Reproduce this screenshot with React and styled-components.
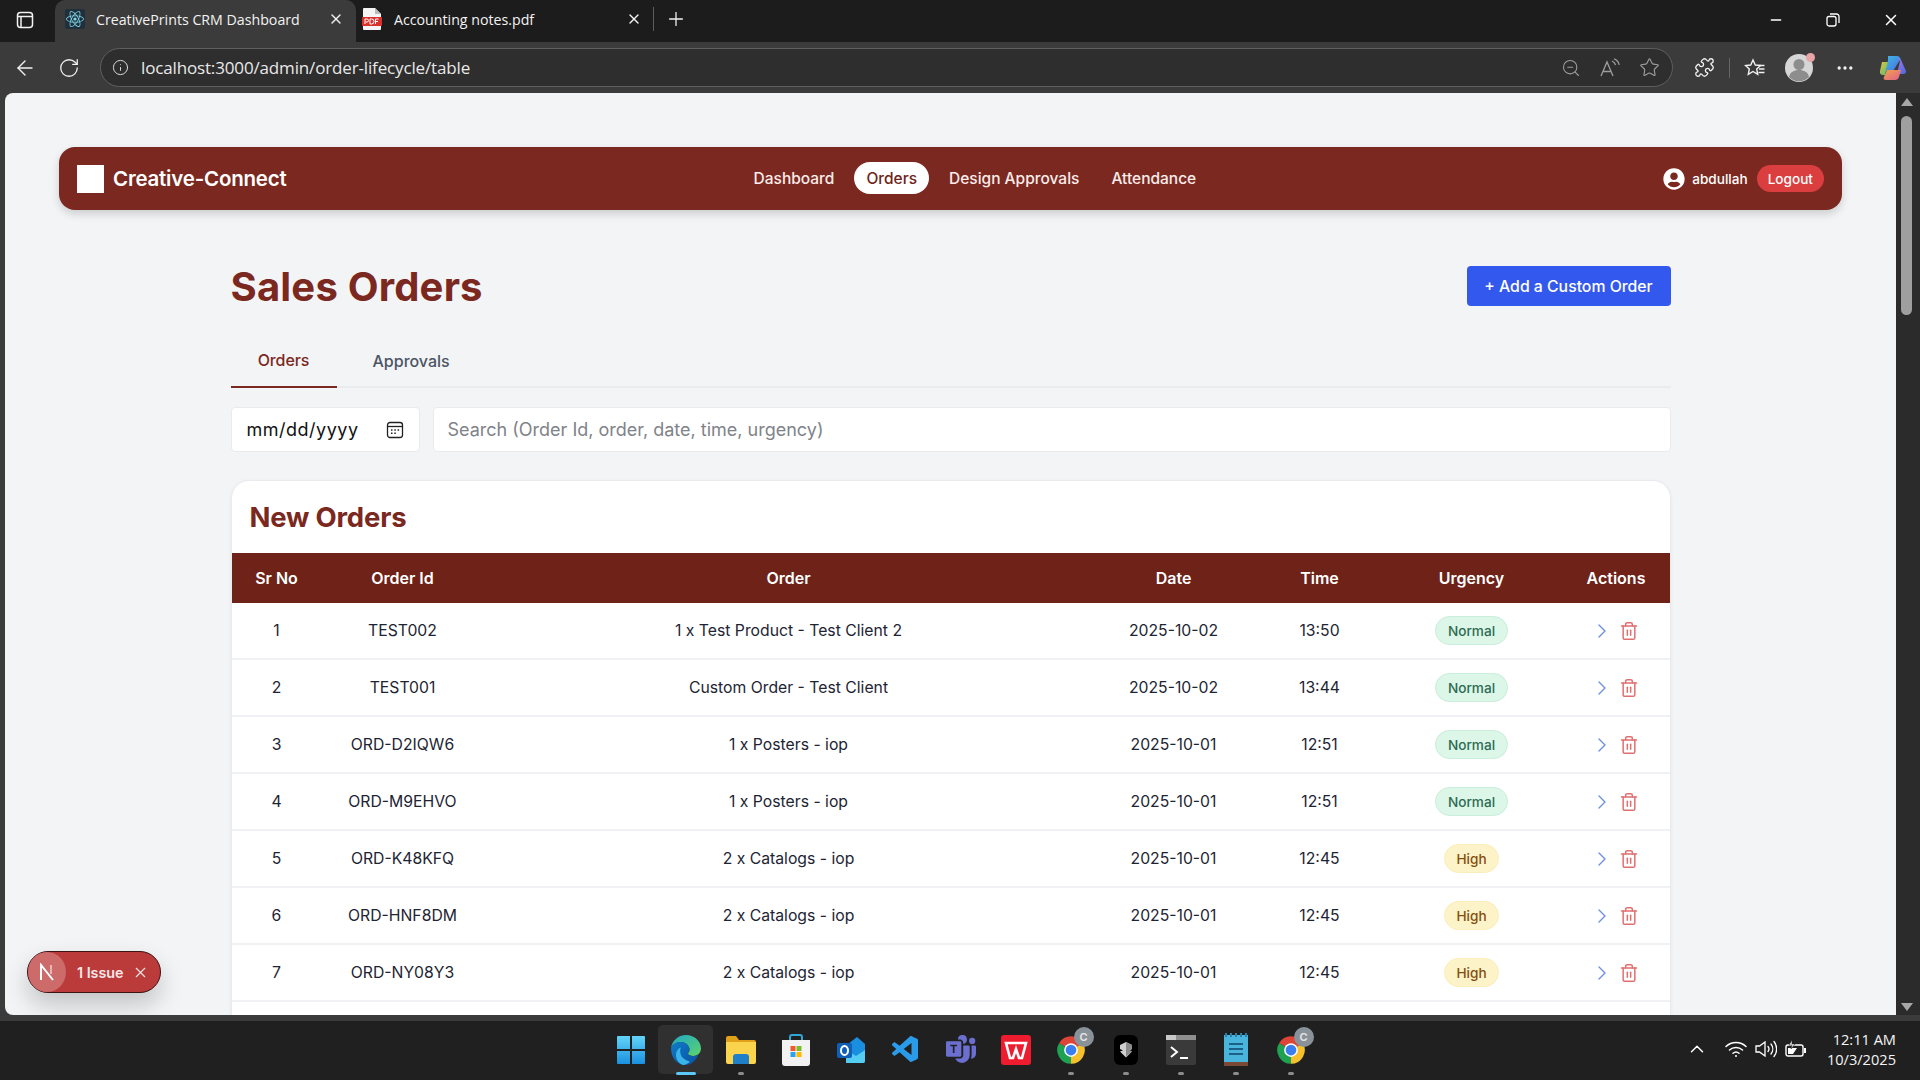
import React from 'react';
import styled, { createGlobalStyle } from 'styled-components';
import { ArrowLeft, RotateCw, Info, ZoomOut, Star, Puzzle, MoreHorizontal, Minus, X, Plus, ChevronRight, Trash2, ChevronUp } from 'lucide-react';
import { FaUserCircle, FaReact } from 'react-icons/fa';
import { VscVscode } from 'react-icons/vsc';
import { BsMicrosoftTeams } from 'react-icons/bs';

const GlobalStyle = createGlobalStyle`
  html, body { margin: 0; height: 100%; overflow: hidden; background: #202020; }
  * { box-sizing: border-box; }
  #root { height: 100%; }
`;

const Frame = styled.div`
  width: 1920px; height: 1080px; display: flex; flex-direction: column;
  background: #3b3b3b; font-family: Inter, "Liberation Sans", sans-serif; overflow: hidden;
`;
const TabStrip = styled.div`
  height: 42px; flex: none; background: #1c1c1c; display: flex; align-items: stretch; color: #f2f2f2;
  font-family: "Open Sans", "Liberation Sans", sans-serif; font-size: 14.2px;
`;
const StripIcon = styled.div`
  width: 55px; display: flex; align-items: center; justify-content: center; padding: 0 6px 3px 0;
`;
const PlusSlot = styled.div`
  display: flex; align-items: center; justify-content: center; padding-bottom: 4px;
`;
const Tab = styled.div`
  width: ${p => p.$w}px; display: flex; align-items: center; padding: 0 ${p => p.$pr}px 4px ${p => p.$pl}px; gap: ${p => p.$gap}px;
  background: ${p => p.$active ? '#3b3b3b' : 'transparent'};
  border-radius: ${p => p.$active ? '10px 10px 0 0' : '0'};
`;
const TabTitle = styled.span`
  flex: 1; white-space: nowrap; overflow: hidden;
`;
const TabDivider = styled.div`
  width: 1px; height: 24px; background: #5c5c5c; align-self: center; margin: 0 11px 4px 0;
`;
const StripFill = styled.div`flex: 1;`;
const WinControls = styled.div`
  display: flex; align-items: center; gap: 42px; padding: 0 20px 3px 0; color: #fff;
`;
const Toolbar = styled.div`
  height: 51px; flex: none; background: #3b3b3b; display: flex; align-items: center; color: #f2f2f2;
`;
const NavBtns = styled.div`
  width: 100px; display: flex; align-items: center; gap: 21px; padding-left: 13px; flex: none;
`;
const AddressBar = styled.div`
  width: 1573px; height: 39px; flex: none; border: 1.5px solid #5f5f5f; border-radius: 20px; background: #2e2e2e;
  display: flex; align-items: center; padding: 0 12px 0 11px; gap: 12px;
`;
const Url = styled.span`
  flex: 1; font-family: "Open Sans", "Liberation Sans", sans-serif; font-size: 17px; color: #e9e9e9; letter-spacing: -0.15px;
`;
const AddressIcons = styled.div`
  display: flex; align-items: center; gap: 18px; color: #9d9d9d;
`;
const ToolIcons = styled.div`
  flex: 1; display: flex; align-items: center; padding-left: 21px; color: #f2f2f2;
`;
const ToolSep = styled.div`
  width: 1px; height: 20px; background: #666; margin: 0 14px 0 14px;
`;
const ProfileWrap = styled.div`
  position: relative; width: 28px; height: 28px; margin: 0 22px 0 19px;
`;
const ProfileDot = styled.span`
  position: absolute; top: -1px; right: -2px; width: 9px; height: 9px; border-radius: 50%; background: #e9a6a6;
`;
const CopilotSlot = styled.span`
  display: block; margin-left: 24px; height: 28px;
`;
const Viewport = styled.div`
  height: 922px; flex: none; display: flex; background: #3b3b3b;
`;
const Page = styled.div`
  position: relative; flex: none; width: 1891px; margin-left: 5px; background: #f3f4f6; border-radius: 8px 0 0 8px; overflow: hidden;
  padding: 54px 54px 0;
`;
const ScrollTrack = styled.div`
  width: 24px; flex: none; background: #2b2b2b; display: flex; flex-direction: column; align-items: center; padding: 5px 3px 0 0;
`;
const ScrollArrow = styled.span`
  width: 0; height: 0; border-left: 6px solid transparent; border-right: 6px solid transparent;
  border-bottom: 8px solid #a8a8a8;
`;
const ScrollThumb = styled.div`
  width: 11px; height: 199px; margin-top: 10px; border-radius: 6px; background: #9f9f9f;
`;
const ScrollSpacer = styled.div`flex: 1;`;
const ScrollArrowDown = styled(ScrollArrow)`
  border-bottom: 0; border-top: 8px solid #a8a8a8; margin-bottom: 4px;
`;
const Nav = styled.nav`
  height: 63px; border-radius: 16px; background: #7b2820; box-shadow: 0 4px 8px rgba(0,0,0,.16);
  display: flex; align-items: center; justify-content: space-between; padding: 0 18px;
  color: #fff;
`;
const Brand = styled.div`
  display: flex; align-items: center; gap: 9px; font-size: 20.5px; font-weight: 600; letter-spacing: -0.2px;
`;
const BrandLogo = styled.span`
  width: 27px; height: 28px; background: #fff; display: block;
`;
const NavLinks = styled.div`
  display: flex; align-items: center; gap: 8px; margin-top: -1px;
`;
const NavLink = styled.a`
  height: 32px; padding: 0 12px; display: flex; align-items: center; border-radius: 16px; font-size: 15.5px; font-weight: 500;
  background: ${p => p.$active ? '#fff' : 'transparent'}; color: ${p => p.$active ? '#6f2318' : '#fbecea'};
`;
const UserBox = styled.div`
  display: flex; align-items: center; font-size: 13.6px; font-weight: 500;
`;
const UserName = styled.span`
  margin: 0 9px 0 7px;
`;
const LogoutBtn = styled.span`
  height: 27px; padding: 0 11px; border-radius: 14px; background: #db3e3e; display: flex; align-items: center; font-size: 13.6px; font-weight: 500;
`;
const Main = styled.main`
  width: 1440px; margin: 0 auto;
`;
const HeadRow = styled.div`
  height: 40px; margin-top: 56px; display: flex; align-items: center; justify-content: space-between;
`;
const Title = styled.h1`
  margin: 0; font-size: 40px; font-weight: 700; color: #7b2820; letter-spacing: 0.2px;
`;
const AddBtn = styled.button`
  width: 204px; height: 40px; border: 0; border-radius: 4px; background: #3358ee; color: #fff; font: 500 15.8px Inter, sans-serif;
`;
const Tabs = styled.div`
  display: flex; margin-top: 35px; height: 47px; border-bottom: 2px solid #e9ebee;
`;
const TabBtn = styled.div`
  height: 47px; display: flex; align-items: center; justify-content: center; font-size: 16px; font-weight: 500;
  color: ${p => p.$active ? '#7b2820' : '#4b5563'}; border-bottom: 2px solid ${p => p.$active ? '#7b2820' : 'transparent'};
  padding: ${p => p.$active ? '0 0 8px 0' : '0 0 5px 36px'}; letter-spacing: ${p => p.$active ? '-0.1px' : '0'};
  width: ${p => p.$active ? '106px' : 'auto'};
`;
const Filters = styled.div`
  display: flex; gap: 13px; margin-top: 19px; height: 45px;
`;
const DateBox = styled.div`
  width: 189px; background: #fff; border: 1px solid #e8eaed; border-radius: 4px; display: flex; align-items: center;
  justify-content: space-between; padding: 0 15px 0 15px; font-size: 18px; color: #111; letter-spacing: 0.5px;
`;
const SearchBox = styled.div`
  flex: 1; background: #fff; border: 1px solid #e8eaed; border-radius: 4px; display: flex; align-items: center; padding: 0 14px;
  font-size: 18px; color: #7f8389;
`;
const Card = styled.section`
  margin-top: 28px; background: #fff; border: 1px solid #e8eaed; border-radius: 18px 18px 0 0; overflow: hidden;
  box-shadow: 0 1px 4px rgba(0,0,0,.05);
`;
const CardTitle = styled.h2`
  margin: 0; height: 72px; padding: 0 18px; display: flex; align-items: center; font-size: 27.5px; font-weight: 700; color: #7b2820; letter-spacing: -0.2px;
`;
const TableRow = styled.div`
  display: grid; grid-template-columns: 90px 162px 610px 160px 132px 172px 1fr;
  height: ${p => p.$head ? '50px' : '57px'}; align-items: center; text-align: center;
  background: ${p => p.$head ? '#6e2218' : '#fff'};
  color: ${p => p.$head ? '#fff' : '#1d2433'};
  font-size: ${p => p.$head ? '16px' : '15.75px'}; font-weight: ${p => p.$head ? 600 : 400};
  border-bottom: ${p => p.$head ? '0' : '2px solid #eff1f4'};
`;
const ActionHead = styled.span`
  padding-left: 5px;
`;
const Pill = styled.span`
  display: inline-flex; align-items: center; height: 29px; padding: 0 11.5px; border-radius: 15px; font-size: 13.6px; font-weight: 500;
  background: ${p => p.$high ? '#fdf3c9' : '#dcf6e8'}; color: ${p => p.$high ? '#854d0e' : '#2d6b52'};
  border: 1px solid ${p => p.$high ? '#fbeeb8' : '#c9eedb'};
`;
const Actions = styled.span`
  display: flex; align-items: center; justify-content: center; gap: 5px; padding-left: 2px;
`;
const IssueBadge = styled.div`
  position: absolute; left: 22px; top: 858px; width: 134px; height: 42px; border-radius: 21px; background: #bb3a3a;
  border: 1px solid #3d1414; display: flex; align-items: center; color: #fff; font-size: 14.3px; font-weight: 600;
  box-shadow: 0 12px 24px rgba(0,0,0,.2);
`;
const IssueLogo = styled.span`
  width: 38px; height: 40px; border-radius: 50%; background: #cd6a6a; display: flex; align-items: center; justify-content: center; flex: none;
`;
const IssueText = styled.span`
  margin: 0 8px 0 11px; color: #fde8e8; white-space: nowrap;
`;
const Taskbar = styled.footer`
  flex: 1; margin-top: 6px; background: #202020; position: relative; display: flex; align-items: center; color: #fff;
`;
const TaskIcons = styled.div`
  position: absolute; left: 603px; top: -1px; height: 59px; display: flex; align-items: center;
`;
const TaskSlot = styled.div`
  position: relative; width: 55px; height: 49px; display: flex; align-items: center; justify-content: center; border-radius: 5px;
  background: ${p => p.$active ? '#303030' : 'transparent'};
`;
const TaskDot = styled.span`
  position: absolute; left: 50%; bottom: -1px; transform: translateX(-50%); height: 3px; border-radius: 2px;
  width: ${p => p.$active ? '20px' : '6px'}; background: ${p => p.$active ? '#5cc8f5' : '#8c8c8c'};
`;
const Tray = styled.div`
  margin-left: auto; display: flex; align-items: center; padding: 0 24px 3px 0; color: #fff;
`;
const TrayIcons = styled.div`
  display: flex; align-items: center; gap: 8px; margin-right: 20px;
`;
const TrayChevron = styled.span`
  display: flex; margin-right: 9px;
`;
const Clock = styled.div`
  font-family: "Open Sans", "Liberation Sans", sans-serif; font-size: 14.6px; line-height: 20px; text-align: right; color: #f4f4f4;
`;

const SidebarIcon = () => (
  <svg width="18" height="18" viewBox="0 0 18 18" fill="none" stroke="#f2f2f2" strokeWidth="1.5">
    <rect x="1.5" y="1.5" width="15" height="15" rx="3" /><path d="M1.5 5.5h15M5 5.5v11" />
  </svg>
);
const ReactFav = () => (
  <svg width="20" height="20" viewBox="0 0 20 20"><rect width="20" height="20" rx="2" fill="#20303a" /><foreignObject x="1" y="1" width="18" height="18"><FaReact size={18} color="#7fd4ea" /></foreignObject></svg>
);
const PdfFav = () => (
  <svg width="20" height="22" viewBox="0 0 20 22">
    <path d="M2 0h11l6 6v15a1 1 0 0 1-1 1H2a1 1 0 0 1-1-1V1a1 1 0 0 1 1-1Z" fill="#f4f4f4" />
    <path d="M13 0l6 6h-6Z" fill="#bbb" />
    <rect x="0" y="9" width="20" height="9" rx="1" fill="#d8322f" />
    <path d="M3 16v-5h2a1.4 1.4 0 0 1 0 3H3.800M8 11v5h1.500a2.500 2.500 0 0 0 0-5ZM13.500 16v-5h3M13.500 13.500h2.500" fill="none" stroke="#fff" strokeWidth="1" />
  </svg>
);
const RestoreIcon = () => (
  <svg width="14" height="14" viewBox="0 0 14 14" fill="none" stroke="#fff" strokeWidth="1.3">
    <rect x="1" y="3.500" width="9" height="9.500" rx="2" /><path d="M4 1h6.500A2.500 2.500 0 0 1 13 3.500V10" />
  </svg>
);
const ReadAloud = () => (
  <svg width="22" height="20" viewBox="0 0 22 20" fill="none" stroke="#9d9d9d" strokeWidth="1.3">
    <path d="M2 18 8 4l6 14M4 13.500h8M13 3c2 .8 3 2 3.600 4M15 0.800c3 1 4.500 3 5.200 6" />
  </svg>
);
const FavList = () => (
  <svg width="22" height="20" viewBox="0 0 22 20" fill="none" stroke="#f2f2f2" strokeWidth="1.4">
    <path d="M9 2l2.300 5 5.200.5-3.800 3.500 1 5.300L9 13.500 4.300 16.300l1-5.300L1.500 7.500 6.700 7Z" /><path d="M14.500 7.500h6M15 11h5.500M14.500 14.500h6" />
  </svg>
);
const Profile = () => (
  <svg width="28" height="28" viewBox="0 0 28 28">
    <circle cx="14" cy="14" r="14" fill="#d6d6d6" /><circle cx="14" cy="10.500" r="5.500" fill="#8d8d8d" />
    <path d="M4 23c1-5 5-7 10-7s9 2 10 7a14 14 0 0 1-20 0Z" fill="#8d8d8d" />
  </svg>
);
const Copilot = () => (
  <svg width="28" height="28" viewBox="0 0 28 28">
    <defs>
      <linearGradient id="cp1" x1="0" y1="0" x2="1" y2="1"><stop offset="0" stopColor="#3fb6e8" /><stop offset="1" stopColor="#4a6fe0" /></linearGradient>
      <linearGradient id="cp2" x1="0" y1="0" x2="1" y2="1"><stop offset="0" stopColor="#e9c13b" /><stop offset="1" stopColor="#49c07a" /></linearGradient>
      <linearGradient id="cp3" x1="0" y1="0" x2="1" y2="1"><stop offset="0" stopColor="#a678e8" /><stop offset="1" stopColor="#4a68e0" /></linearGradient>
      <linearGradient id="cp4" x1="0" y1="0" x2="1" y2="1"><stop offset="0" stopColor="#f0a34a" /><stop offset="1" stopColor="#e0608a" /></linearGradient>
    </defs>
    <path d="M9 2h9c2 0 3 1 3.500 3L14 17H7L9 6Z" fill="url(#cp1)" />
    <path d="M3 8h6l-2 9-1 4H4c-2 0-3.500-1.500-3-4Z" fill="url(#cp2)" />
    <path d="M19 4c2 0 3 1.500 3.700 3.500L27 17c.5 2-1 3-3 3h-6l3-13Z" fill="url(#cp3)" />
    <path d="M8 16h14l-2 7c-.5 2-2 3-4 3H7c-2 0-3-1-2-3Z" fill="url(#cp4)" />
  </svg>
);
const PickerIcon = () => (
  <svg width="18" height="18" viewBox="0 0 18 18" fill="none" stroke="#222" strokeWidth="1.300">
    <rect x="1.500" y="1.500" width="15" height="15" rx="2.500" /><path d="M1.500 5.500h15" />
    <path d="M5 9h1.500M8.300 9h1.500M11.600 9h1.500M5 12.300h1.500M8.300 12.300h1.500" strokeWidth="1.500" />
  </svg>
);

const WinLogo = () => (
  <svg width="30" height="30" viewBox="0 0 30 30">
    <defs><linearGradient id="win" x1="0" y1="0" x2="0" y2="1"><stop offset="0" stopColor="#62d4f8" /><stop offset="1" stopColor="#1a90e0" /></linearGradient></defs>
    <path d="M1 2a1 1 0 0 1 1-1h12v13H1ZM16 1h12a1 1 0 0 1 1 1v12H16ZM1 16h13v13H2a1 1 0 0 1-1-1ZM16 16h13v12a1 1 0 0 1-1 1H16Z" fill="url(#win)" />
  </svg>
);
const Edge = () => (
  <svg width="32" height="32" viewBox="0 0 32 32">
    <defs>
      <linearGradient id="eg" x1="0" y1="0" x2="1" y2="1"><stop offset="0" stopColor="#1fa9c9" /><stop offset="1" stopColor="#5fd36a" /></linearGradient>
      <linearGradient id="eb" x1="0" y1="0" x2="1" y2="1"><stop offset="0" stopColor="#0f7cc9" /><stop offset="1" stopColor="#0a4fa0" /></linearGradient>
    </defs>
    <path d="M16 1c9 0 15 6.500 15 13.500 0 4.500-3.500 7.500-8 7.500-3 0-5-1-5-2.500 0-1 1.500-1.500 1.500-4C19.500 11 15 8 10.500 8 6 8 2.500 10.500 1 14 2 7 8 1 16 1Z" fill="url(#eg)" />
    <path d="M1 14c1.500-3.500 5-6 9.500-6 4.500 0 9 3 9 7.500 0 2.500-1.500 3-1.500 4 0 1.500 2 2.500 5 2.500 2 0 4-.5 5.500-1.500C25.500 27 21 31 15.500 31 7 31 1 24 1 14Z" fill="url(#eb)" />
    <path d="M13 31c-5-2-7-6-7-10 0-4 2.500-7 5-7.500C9.500 16 10 21 13 24c2 2 5 3 7 3.500-2 2-4.500 3.500-7 3.500Z" fill="#39b3e8" />
  </svg>
);
const Folder = () => (
  <svg width="32" height="30" viewBox="0 0 32 30">
    <path d="M1 3a2 2 0 0 1 2-2h8l3 4h15a2 2 0 0 1 2 2v3H1Z" fill="#e0a01a" />
    <path d="M1 7h30v20a2 2 0 0 1-2 2H3a2 2 0 0 1-2-2Z" fill="#fbd44d" />
    <path d="M8 29v-7a3 3 0 0 1 3-3h10a3 3 0 0 1 3 3v7Z" fill="#1f7fc9" />
  </svg>
);
const Store = () => (
  <svg width="30" height="32" viewBox="0 0 30 32">
    <path d="M9 6V3a2 2 0 0 1 2-2h8a2 2 0 0 1 2 2v3" fill="none" stroke="#2fa6d8" strokeWidth="2" />
    <path d="M1 6h28v23a3 3 0 0 1-3 3H4a3 3 0 0 1-3-3Z" fill="#f2f2f2" />
    <rect x="9.500" y="12" width="5" height="5" fill="#ef5a2a" /><rect x="15.500" y="12" width="5" height="5" fill="#7cbb2a" />
    <rect x="9.500" y="18" width="5" height="5" fill="#2aa3ef" /><rect x="15.500" y="18" width="5" height="5" fill="#fdb900" />
  </svg>
);
const Outlook = () => (
  <svg width="30" height="28" viewBox="0 0 30 28">
    <path d="M12 8l9-7 8 7v17a2 2 0 0 1-2 2H12Z" fill="#1a8fe0" /><path d="M10 14l10 6 9-6v11a2 2 0 0 1-2 2H10Z" fill="#55cdf2" />
    <rect x="1" y="7" width="15" height="15" rx="2" fill="#0f5fb8" />
    <ellipse cx="8.500" cy="14.500" rx="3.500" ry="4.500" fill="none" stroke="#fff" strokeWidth="2" />
  </svg>
);
const Wps = () => (
  <svg width="30" height="30" viewBox="0 0 30 30">
    <rect width="30" height="30" rx="3" fill="#ee1c2e" />
    <path d="M5 8h20l-4 15h-3l-3-9-3 9H9Z" fill="none" stroke="#fff" strokeWidth="2.600" />
  </svg>
);
const TaskWrap = styled.span`
  position: relative; display: block; width: 30px; height: 30px;
`;
const ChromeBadge = styled.span`
  position: absolute; top: -8px; right: -8px; width: 20px; height: 20px; border-radius: 50%; background: #8a9299;
  color: #e8e8e8; font: 600 11px/20px Inter, sans-serif; text-align: center;
`;
const Chrome = () => (
  <TaskWrap>
    <svg width="30" height="30" viewBox="0 0 24 24">
      <path d="M12 12 2.470 6.500A11 11 0 0 1 21.530 6.500Z" fill="#dd4437" />
      <path d="M12 12 21.530 6.500A11 11 0 0 1 12 23Z" fill="#f6c02c" />
      <path d="M12 12 12 23A11 11 0 0 1 2.470 6.500Z" fill="#1ea252" />
      <circle cx="12" cy="12" r="5.500" fill="#fff" /><circle cx="12" cy="12" r="4.300" fill="#3b7ef0" />
    </svg>
    <ChromeBadge>C</ChromeBadge>
  </TaskWrap>
);
const BlackApp = () => (
  <svg width="24" height="30" viewBox="0 0 24 30">
    <rect width="24" height="30" rx="6" fill="#000" />
    <path d="M6 10l6-3 6 3v4l-3 1.500 3 1-6 6-6-6 3-1-3-1.500Z" fill="#cfcfcf" /><path d="M12 7v15l6-6-3-1 3-1.500V10Z" fill="#8c8c8c" />
  </svg>
);
const Terminal = () => (
  <svg width="30" height="30" viewBox="0 0 30 30">
    <rect width="30" height="30" rx="2" fill="#3a3a3a" /><rect width="30" height="5" fill="#8f8f8f" /><rect x="0" width="10" height="5" fill="#c8c8c8" />
    <path d="M5 12l6 5-6 5" fill="none" stroke="#fff" strokeWidth="2" /><path d="M14 23h8" stroke="#fff" strokeWidth="2" />
  </svg>
);
const Notepad = () => (
  <svg width="24" height="34" viewBox="0 0 24 34">
    <rect x="0" y="2" width="24" height="30" fill="#49b5dd" /><rect x="0" y="29" width="24" height="4" fill="#7a4a35" />
    <path d="M2 0v4M7 0v4M12 0v4M17 0v4M22 0v4" stroke="#2d7ea8" strokeWidth="2" />
    <path d="M5 11h14M5 16h14M5 21h14" stroke="#1c5f87" strokeWidth="2" />
  </svg>
);
const Wifi = () => (
  <svg width="22" height="18" viewBox="0 0 22 18" fill="none" stroke="#fff" strokeWidth="1.500" strokeLinecap="round">
    <path d="M1 6.500a14.500 14.500 0 0 1 20 0M4.500 10a9.500 9.500 0 0 1 13 0M8 13.300a4.500 4.500 0 0 1 6 0" /><circle cx="11" cy="16" r="1" fill="#fff" stroke="none" />
  </svg>
);
const Volume = () => (
  <svg width="22" height="18" viewBox="0 0 22 18" fill="none" stroke="#fff" strokeWidth="1.300" strokeLinecap="round">
    <path d="M1 6h3.500L10 2v14l-5.500-4H1ZM13 6.500a4 4 0 0 1 0 5M16 4a8 8 0 0 1 0 10M19 1.500a12 12 0 0 1 0 15" />
  </svg>
);
const Battery = () => (
  <svg width="22" height="18" viewBox="0 0 22 18">
    <rect x="1" y="5" width="17" height="11" rx="2" fill="none" stroke="#fff" strokeWidth="1.400" />
    <path d="M3 14V8h9l-4 6Z" fill="#fff" /><rect x="19" y="8" width="2" height="5" fill="#fff" />
    <path d="M7 0 4 5h3l-1 4 4-5H7Z" fill="#fff" stroke="#202020" strokeWidth=".6" />
  </svg>
);
const NextMark = () => (
  <svg width="16" height="18" viewBox="0 0 16 18" fill="none" stroke="#fff" strokeWidth="2">
    <path d="M2 17V2l12 15" /><path d="M12 2v9" strokeOpacity=".5" />
  </svg>
);

const rows = [
  ['1', 'TEST002', '1 x Test Product - Test Client 2', '2025-10-02', '13:50', 'Normal'],
  ['2', 'TEST001', 'Custom Order - Test Client', '2025-10-02', '13:44', 'Normal'],
  ['3', 'ORD-D2IQW6', '1 x Posters - iop', '2025-10-01', '12:51', 'Normal'],
  ['4', 'ORD-M9EHVO', '1 x Posters - iop', '2025-10-01', '12:51', 'Normal'],
  ['5', 'ORD-K48KFQ', '2 x Catalogs - iop', '2025-10-01', '12:45', 'High'],
  ['6', 'ORD-HNF8DM', '2 x Catalogs - iop', '2025-10-01', '12:45', 'High'],
  ['7', 'ORD-NY08Y3', '2 x Catalogs - iop', '2025-10-01', '12:45', 'High'],
];
const taskApps = [
  [<WinLogo />, false, false], [<Edge />, true, true], [<Folder />, false, true], [<Store />, false, false],
  [<Outlook />, false, false], [<VscVscode size={32} color="#2a9be8" />, false, false], [<BsMicrosoftTeams size={30} color="#6a6fd0" />, false, false],
  [<Wps />, false, false], [<Chrome />, false, true], [<BlackApp />, false, true], [<Terminal />, false, true], [<Notepad />, false, true], [<Chrome />, false, true],
];

export default function App() {
  return (
    <Frame>
      <GlobalStyle />
      <TabStrip>
        <StripIcon><SidebarIcon /></StripIcon>
        <Tab $active $w={301} $pl={10} $pr={12} $gap={11}>
          <ReactFav /><TabTitle>CreativePrints CRM Dashboard</TabTitle><X size={16} />
        </Tab>
        <Tab $w={297} $pl={6} $pr={11} $gap={12}>
          <PdfFav /><TabTitle>Accounting notes.pdf</TabTitle><X size={16} />
        </Tab>
        <TabDivider />
        <PlusSlot><Plus size={22} strokeWidth={1.4} /></PlusSlot>
        <StripFill />
        <WinControls><Minus size={16} /><RestoreIcon /><X size={18} /></WinControls>
      </TabStrip>
      <Toolbar>
        <NavBtns><ArrowLeft size={24} strokeWidth={1.4} /><RotateCw size={22} strokeWidth={1.4} /></NavBtns>
        <AddressBar>
          <Info size={17} strokeWidth={1.4} color="#dcdcdc" />
          <Url>localhost:3000/admin/order-lifecycle/table</Url>
          <AddressIcons><ZoomOut size={20} strokeWidth={1.3} /><ReadAloud /><Star size={21} strokeWidth={1.3} /></AddressIcons>
        </AddressBar>
        <ToolIcons>
          <Puzzle size={21} strokeWidth={1.5} />
          <ToolSep />
          <FavList />
          <ProfileWrap><Profile /><ProfileDot /></ProfileWrap>
          <MoreHorizontal size={20} />
          <CopilotSlot><Copilot /></CopilotSlot>
        </ToolIcons>
      </Toolbar>
      <Viewport>
        <Page>
          <Nav>
            <Brand><BrandLogo />Creative-Connect</Brand>
            <NavLinks>
              <NavLink>Dashboard</NavLink>
              <NavLink $active>Orders</NavLink>
              <NavLink>Design Approvals</NavLink>
              <NavLink>Attendance</NavLink>
            </NavLinks>
            <UserBox><FaUserCircle size={22} /><UserName>abdullah</UserName><LogoutBtn>Logout</LogoutBtn></UserBox>
          </Nav>
          <Main>
            <HeadRow><Title>Sales Orders</Title><AddBtn>+ Add a Custom Order</AddBtn></HeadRow>
            <Tabs><TabBtn $active>Orders</TabBtn><TabBtn>Approvals</TabBtn></Tabs>
            <Filters>
              <DateBox>mm/dd/yyyy<PickerIcon /></DateBox>
              <SearchBox>Search (Order Id, order, date, time, urgency)</SearchBox>
            </Filters>
            <Card>
              <CardTitle>New Orders</CardTitle>
              <TableRow $head>
                <span>Sr No</span><span>Order Id</span><span>Order</span><span>Date</span><span>Time</span><span>Urgency</span><ActionHead>Actions</ActionHead>
              </TableRow>
              {rows.map(r => (
                <TableRow key={r[0]}>
                  <span>{r[0]}</span><span>{r[1]}</span><span>{r[2]}</span><span>{r[3]}</span><span>{r[4]}</span>
                  <span><Pill $high={r[5] === 'High'}>{r[5]}</Pill></span>
                  <Actions><ChevronRight size={24} strokeWidth={1.4} color="#6f8fe0" /><Trash2 size={20} strokeWidth={1.8} color="#e07070" /></Actions>
                </TableRow>
              ))}
              <TableRow />
            </Card>
          </Main>
          <IssueBadge><IssueLogo><NextMark /></IssueLogo><IssueText>1 Issue</IssueText><X size={17} strokeWidth={1.6} color="#fde8e8" /></IssueBadge>
        </Page>
        <ScrollTrack>
          <ScrollArrow /><ScrollThumb /><ScrollSpacer /><ScrollArrowDown />
        </ScrollTrack>
      </Viewport>
      <Taskbar>
        <TaskIcons>
          {taskApps.map(([icon, active, dot], i) => (
            <TaskSlot key={i} $active={active}>{icon}{dot && <TaskDot $active={active} />}</TaskSlot>
          ))}
        </TaskIcons>
        <Tray>
          <TrayIcons><TrayChevron><ChevronUp size={22} strokeWidth={1.6} /></TrayChevron><Wifi /><Volume /><Battery /></TrayIcons>
          <Clock>12:11 AM<br />10/3/2025</Clock>
        </Tray>
      </Taskbar>
    </Frame>
  );
}
